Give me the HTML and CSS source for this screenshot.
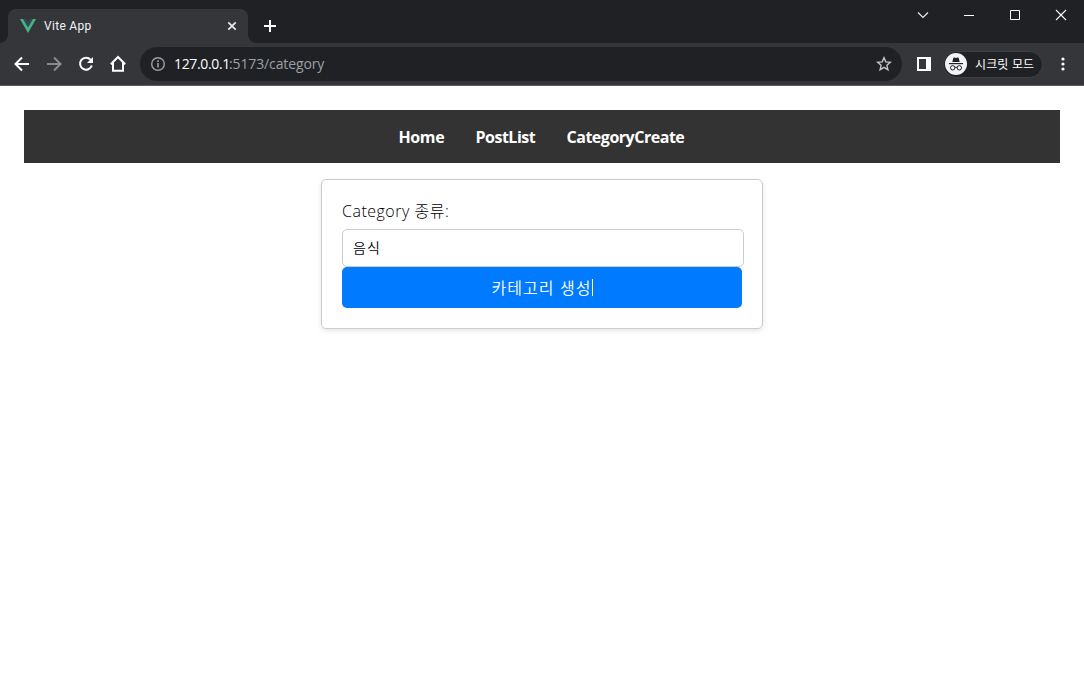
FILE: index.html
```html
<!DOCTYPE html>
<html lang="ko">
<head>
<meta charset="utf-8">
<title>Vite App</title>
<link rel="stylesheet" href="styles.css">
</head>
<body>
<header class="browser">
  <div class="tabstrip">
    <div class="tab">
      <svg class="vue" width="16" height="14" viewBox="0 0 16 14"><path d="M0 0h3.2L8 8.3 12.800 0H16L8 13.900z" fill="#41b883"/><path d="M3.200 0h3L8 3.100 9.800 0h3L8 8.300z" fill="#35495e"/></svg>
      <span class="tab-title">Vite App</span>
      <svg width="10" height="10" viewBox="0 0 10 10"><path d="M1.300 1.300l7.400 7.400M8.700 1.300L1.300 8.700" stroke="#e8eaed" stroke-width="1.700"/></svg>
    </div>
    <svg class="plus" width="14" height="14" viewBox="0 0 14 14"><path d="M7 1v12M1 7h12" stroke="#fff" stroke-width="2"/></svg>
    <div class="window-controls">
      <svg width="46" height="30"><path d="M18 12.500l5 5 5-5" fill="none" stroke="#f0f0f0" stroke-width="1.100"/></svg>
      <svg width="46" height="30"><path d="M18 15.500h10" stroke="#fff"/></svg>
      <svg width="46" height="30"><path d="M18.500 10.500h9v9h-9z" fill="none" stroke="#fff"/></svg>
      <svg width="46" height="30"><path d="M18 10l10 10M28 10L18 20" stroke="#fff" stroke-width="1.100"/></svg>
    </div>
  </div>
  <div class="toolbar">
    <div class="nav-icons">
      <svg width="32" height="32" viewBox="0 0 32 32"><path d="M23 16H10.500M16 9.500L9.500 16l6.500 6.500" fill="none" stroke="#fff" stroke-width="2"/></svg>
      <svg width="32" height="32" viewBox="0 0 32 32"><path d="M9 16h12.500M16 9.500l6.500 6.500-6.500 6.500" fill="none" stroke="#8a8b8e" stroke-width="2"/></svg>
      <svg width="32" height="32" viewBox="0 0 32 32"><path d="M20.600 11.700A6 6 0 1 0 21.800 17.500" fill="none" stroke="#fff" stroke-width="2"/><path d="M23 9v6h-6z" fill="#fff"/></svg>
      <svg width="32" height="32" viewBox="0 0 32 32"><path d="M8.800 16.200L16 9l7.200 7.200M11 14.500V22.800h10V14.500" fill="none" stroke="#fff" stroke-width="2"/></svg>
    </div>
    <div class="omnibox">
      <svg width="16" height="16" viewBox="0 0 16 16"><circle cx="8" cy="8" r="6.300" fill="none" stroke="#9aa0a6" stroke-width="1.400"/><path d="M8 7v4.500M8 4.300v1.600" stroke="#9aa0a6" stroke-width="1.600"/></svg>
      <div class="url"><span class="host">127.0.0.1</span><span class="path">:5173/category</span></div>
      <svg width="16" height="16" viewBox="0 0 16 16"><path d="M8 1.800l1.800 4.100 4.500.4-3.400 3 1 4.400L8 11.400l-3.900 2.300 1-4.400-3.400-3 4.500-.4z" fill="none" stroke="#c3c5c8" stroke-width="1.400"/></svg>
    </div>
    <svg class="panel" width="14" height="14" viewBox="0 0 14 14"><path d="M0 0h14v14H0zM2 2v10h7V2z" fill="#fff" fill-rule="evenodd"/></svg>
    <div class="incognito">
      <svg width="22" height="22" viewBox="0 0 22 22"><circle cx="11" cy="11" r="11" fill="#f1f3f4"/><path d="M7.300 9l1-4q.2-.7 1-.5l1.700.4 1.700-.4q.8-.2 1 .5l1 4z" fill="#202124"/><path d="M4 10.600h14" stroke="#202124" stroke-width="1.200"/><g fill="none" stroke="#202124" stroke-width="1"><circle cx="7.700" cy="14.800" r="2.200"/><circle cx="14.300" cy="14.800" r="2.200"/><path d="M9.900 14.500q1.100-.7 2.200 0"/></g></svg>
      <span>시크릿 모드</span>
    </div>
    <svg class="more" width="4" height="14" viewBox="0 0 4 14"><g fill="#fff"><circle cx="2" cy="2" r="1.600"/><circle cx="2" cy="7" r="1.600"/><circle cx="2" cy="12" r="1.600"/></g></svg>
  </div>
</header>
<main class="page">
  <nav class="site-nav">
    <a class="home">Home</a><a class="posts">PostList</a><a class="create">CategoryCreate</a>
  </nav>
  <form class="card">
    <label class="label"><span class="latin">Category</span> 종류:</label>
    <div class="field">음식</div>
    <div class="submit"><span class="submit-text">카테고리 생성</span><i class="caret"></i></div>
  </form>
</main>
</body>
</html>
```
FILE: styles.css
```css
* { box-sizing: border-box; }
body { margin: 0; background: #fff; font-family: "Open Sans", "Noto Sans CJK KR", sans-serif; height: 673px; overflow: hidden; }
svg { display: block; flex: none; }
.tabstrip { height: 43px; background: #202124; display: flex; align-items: flex-end; padding-left: 8px; }
.tab { position: relative; width: 240px; height: 34px; background: #35363a; border-radius: 8px 8px 0 0; display: flex; align-items: center; padding: 0 11px 0 12px; }
.tab::before, .tab::after { content: ""; position: absolute; bottom: 0; width: 8px; height: 8px; }
.tab::before { left: -8px; background: radial-gradient(circle at 0 0, #202124 7.5px, #35363a 8px); }
.tab::after { right: -8px; background: radial-gradient(circle at 100% 0, #202124 7.5px, #35363a 8px); }
.tab-title { flex: 1; margin-left: 8px; color: #f1f3f4; font: 12px/16px Roboto, sans-serif; letter-spacing: .3px; }
.plus { margin: 0 0 10px 15px; }
.window-controls { display: flex; align-self: flex-start; margin-left: auto; }
.toolbar { height: 43px; background: #35363a; border-bottom: 1px solid #5b5c5f; display: flex; align-items: center; padding-left: 6px; }
.nav-icons { display: flex; width: 134px; }
.omnibox { width: 762px; height: 34px; border-radius: 17px; background: #202124; display: flex; align-items: center; padding: 0 10px; }
.url { flex: 1; margin-left: 8px; font-size: 14px; line-height: 20px; white-space: nowrap; }
.host, .path { display: inline-block; }
.host { color: #fff; width: 55px; letter-spacing: -.35px; }
.path { color: #9aa0a6; letter-spacing: -.12px; }
.panel { margin-left: 15px; }
.incognito { margin-left: 12px; width: 100px; height: 27px; border: 1px solid #3f4044; border-radius: 14px; background: #202124; display: flex; align-items: center; padding-left: 1px; color: #fff; font: 12px/18px "Noto Sans CJK KR", sans-serif; letter-spacing: .1px; white-space: nowrap; }
.incognito span { margin-left: 8px; }
.more { margin-left: 18px; }
.page { padding: 24px; }
.site-nav { height: 53px; background: #333; display: flex; justify-content: center; align-items: center; gap: 31px; }
.site-nav a { color: #fff; font-weight: 700; font-size: 16px; line-height: 24px; white-space: nowrap; }
.home { width: 46px; letter-spacing: -.4px; }
.posts { width: 60px; letter-spacing: -.5px; }
.create { width: 119px; letter-spacing: -.48px; }
.card { width: 442px; height: 150px; margin: 16px auto 0; padding: 20px; border: 1px solid #ccc; border-radius: 5px; box-shadow: 0 2px 5px rgba(0, 0, 0, .1); }
.label { display: block; height: 29px; font-size: 16px; line-height: 22px; color: #000; font-weight: 300; letter-spacing: .5px; white-space: nowrap; }
.field { width: 402px; height: 38px; border: 1px solid #ccc; border-radius: 5px; padding: 0 10px; font: 350 14px/34px "Noto Sans CJK KR", sans-serif; letter-spacing: 1px; color: #000; }
.submit { width: 400px; height: 41px; border-radius: 5px; background: #007bff; color: #fff; display: flex; align-items: center; justify-content: center; padding-bottom: 1px; font: 350 16px/24px "Noto Sans CJK KR", sans-serif; letter-spacing: 1.05px; }
.caret { width: 1px; height: 17px; margin-top: 1px; background: #fff; }
```
